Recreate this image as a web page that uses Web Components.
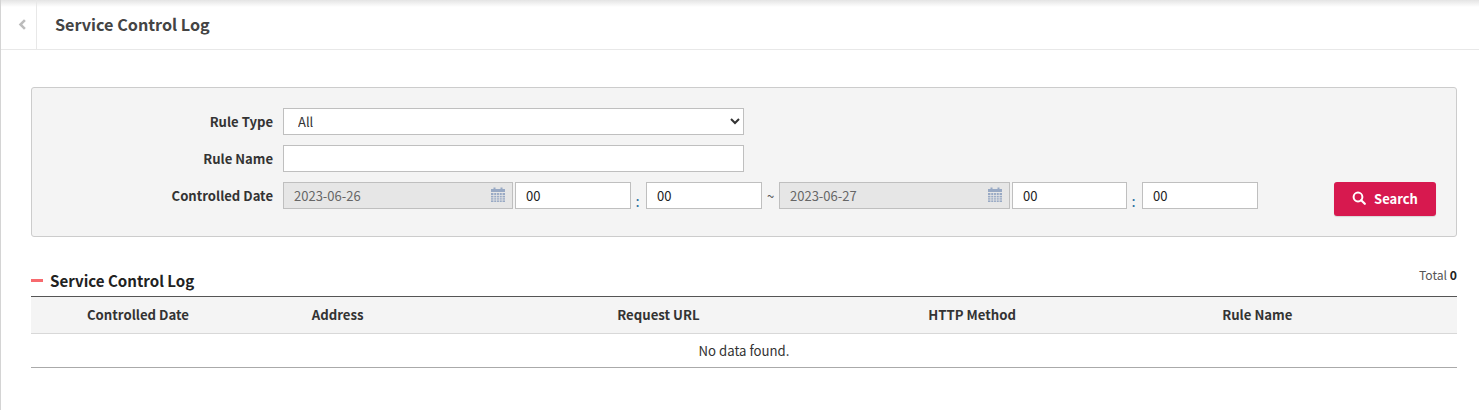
<!DOCTYPE html>
<html lang="en">
<head>
<meta charset="utf-8">
<title>Service Control Log</title>
<style>
  html, body { margin: 0; padding: 0; background: #fff; }
  body { font-family: "Noto Sans CJK KR", "Noto Sans", sans-serif; font-size: 13.2px; color: #333; }
</style>
</head>
<body>
<log-page>
  <page-header slot="header" title="Service Control Log"></page-header>
  <search-panel>
    <form-row label="Rule Type"><rule-select></rule-select></form-row>
    <form-row label="Rule Name"><text-field width="461"></text-field></form-row>
    <form-row label="Controlled Date">
      <date-field value="2023-06-26"></date-field>
      <time-field></time-field>
      <span class="tilde">~</span>
      <date-field value="2023-06-27" wide></date-field>
      <time-field></time-field>
    </form-row>
    <search-button slot="action">Search</search-button>
  </search-panel>
  <log-table title="Service Control Log" total="0"></log-table>
</log-page>

<script>
const CTRL = `
  box-sizing: border-box; height: 27px; border: 1px solid #bfbfbf; background: #fff;
  font: 13px "Noto Sans CJK KR", "Noto Sans", sans-serif; color: #333; border-radius: 0; outline: none;
`;

class LogPage extends HTMLElement {
    constructor() {
        super();
        this.attachShadow({ mode: 'open' }).innerHTML = `
      <style>
        :host { display: block; box-sizing: border-box; height: 410px; border-left: 1px solid #d4d4d4; position: relative; overflow: hidden; }
        .shade { position: absolute; left: 0; right: 0; top: 0; height: 7px; background: linear-gradient(#e4e4e4, #fff); }
        main { padding: 37px 22px 0 30px; }
      </style>
      <div class="shade"></div>
      <slot name="header"></slot>
      <main><slot></slot></main>
    `;
    }
}

class PageHeader extends HTMLElement {
    constructor() {
        super();
        this.attachShadow({ mode: 'open' }).innerHTML = `
      <style>
        :host { display: flex; align-items: stretch; position: relative; height: 50px; box-sizing: border-box; border-bottom: 1px solid #e8e8e8; }
        .back { width: 36px; border-right: 1px solid #e8e8e8; display: flex; align-items: center; justify-content: center; height: 49px; padding-left: 6px; box-sizing: border-box; }
        h1 { margin: 0 0 0 18px; font-size: 16.2px; font-weight: 700; color: #444; line-height: 49px; }
      </style>
      <div class="back">
        <svg width="8" height="11" viewBox="0 0 8 11"><path d="M6 0.3 L0.7 5.5 L6 10.7 L7.8 8.9 L4.3 5.5 L7.8 2.1 Z" fill="#bcbcbc"/></svg>
      </div>
      <h1>${this.getAttribute('title')}</h1>
    `;
    }
}

class SearchPanel extends HTMLElement {
    constructor() {
        super();
        this.attachShadow({ mode: 'open' }).innerHTML = `
      <style>
        :host { display: flex; box-sizing: border-box; height: 150px; background: #f4f4f4; border: 1px solid #ccc; border-radius: 3px; padding: 20px 20px 0 0; }
        .rows { flex: 1; display: flex; flex-direction: column; gap: 10px; }
        .action { align-self: flex-start; margin-top: 74px; }
      </style>
      <div class="rows"><slot></slot></div>
      <div class="action"><slot name="action"></slot></div>
    `;
    }
}

class FormRow extends HTMLElement {
    constructor() {
        super();
        this.attachShadow({ mode: 'open' }).innerHTML = `
      <style>
        :host { display: flex; align-items: center; height: 27px; }
        label { width: 241px; text-align: right; margin-right: 10px; font-size: 13.1px; font-weight: 700; color: #333; white-space: nowrap; line-height: 27px; }
        .ctl { display: flex; align-items: center; }
        ::slotted(.tilde) { width: 17px; text-align: center; color: #555; font-size: 13px; }
      </style>
      <label>${this.getAttribute('label')}</label>
      <div class="ctl"><slot></slot></div>
    `;
    }
}

class RuleSelect extends HTMLElement {
    constructor() {
        super();
        this.attachShadow({ mode: 'open' }).innerHTML = `
      <style>
        :host { display: block; }
        select { ${CTRL} width: 461px; padding: 0 0 0 10px; }
      </style>
      <select><option>All</option></select>
    `;
    }
}

class TextField extends HTMLElement {
    constructor() {
        super();
        this.attachShadow({ mode: 'open' }).innerHTML = `
      <style>
        :host { display: block; }
        input { ${CTRL} width: ${this.getAttribute('width')}px; padding: 0 10px; }
      </style>
      <input type="text">
    `;
    }
}

class DateField extends HTMLElement {
    constructor() {
        super();
        const width = this.hasAttribute('wide') ? 231 : 230;
        this.attachShadow({ mode: 'open' }).innerHTML = `
      <style>
        :host { display: block; position: relative; width: ${width}px; height: 27px; margin-right: 2px; }
        input { ${CTRL} width: 100%; padding: 0 10px; background: #e6e6e6; color: #666; }
        svg { position: absolute; right: 8px; top: 5px; }
      </style>
      <input type="text" readonly value="${this.getAttribute('value')}">
      <svg width="14" height="15" viewBox="0 0 14 15">
        <path fill="#98a9c4" d="M0 2h2.5V0.5h2V2h5V0.5h2V2H14v3H0zM0 6h14v9H0z"/>
        <path stroke="#e6e6e6" stroke-width="0.8" fill="none" d="M0 8.5h14M0 10.8h14M0 13h14M2.8 6v9M5.6 6v9M8.4 6v9M11.2 6v9"/>
      </svg>
    `;
    }
}

class TimeField extends HTMLElement {
    constructor() {
        super();
        const second = this.previousElementSibling && this.previousElementSibling.hasAttribute('wide');
        this.attachShadow({ mode: 'open' }).innerHTML = `
      <style>
        :host { display: flex; align-items: center; }
        input { ${CTRL} width: 116px; padding: 0 10px; color: #222; }
        input.first { width: ${second ? 115 : 116}px; }
        .colon { width: 15px; text-align: center; color: #2a6f9e; font-size: 15px; line-height: 27px; position: relative; top: 5px; left: -1px; }
      </style>
      <input class="first" type="text" value="00"><span class="colon">:</span><input type="text" value="00">
    `;
    }
}

class SearchButton extends HTMLElement {
    constructor() {
        super();
        this.attachShadow({ mode: 'open' }).innerHTML = `
      <style>
        :host { display: block; }
        button { box-sizing: border-box; width: 102px; height: 34px; border: 0; border-radius: 3px; background: #d7194f; color: #fff; display: flex; align-items: center; justify-content: center; gap: 8px; font: 700 13px "Noto Sans CJK KR", "Noto Sans", sans-serif; padding: 0 0 2px; box-shadow: 0 1px 1px rgba(0,0,0,.12); }
      </style>
      <button>
        <svg width="14" height="14" viewBox="0 0 14 14"><circle cx="6" cy="6" r="4.4" fill="none" stroke="#fff" stroke-width="2"/><path d="M9.2 9.2 L12.8 12.8" stroke="#fff" stroke-width="2.2" stroke-linecap="round"/></svg>
        <slot></slot>
      </button>
    `;
    }
}

class LogTable extends HTMLElement {
    constructor() {
        super();
        const cols = [['Controlled Date', 15], ['Address', 13], ['Request URL', 32], ['HTTP Method', 12], ['Rule Name', 28]];
        this.attachShadow({ mode: 'open' }).innerHTML = `
      <style>
        :host { display: block; margin-top: 29px; }
        .head { display: flex; justify-content: space-between; height: 30px; }
        h2 { margin: 0; height: 28px; font-size: 15.1px; font-weight: 700; color: #222; display: flex; align-items: center; gap: 7px; line-height: 28px; }
        h2::before { content: ""; width: 12px; height: 3px; background: #f76a6e; }
        .total { font-size: 12.2px; color: #555; line-height: 18px; }
        .total b { color: #222; }
        table { width: 100%; border-collapse: collapse; table-layout: fixed; border-top: 1px solid #555; }
        th { height: 37px; padding: 0 0 2px; background: #f4f4f4; border-bottom: 1px solid #d8d8d8; font-size: 13.2px; font-weight: 700; color: #333; box-sizing: border-box; }
        td { height: 32px; padding: 0 0 1px; text-align: center; border-bottom: 1px solid #aaa; font-size: 13.2px; color: #333; box-sizing: content-box; }
      </style>
      <div class="head">
        <h2>${this.getAttribute('title')}</h2>
        <div class="total">Total <b>${this.getAttribute('total')}</b></div>
      </div>
      <table>
        <colgroup>${cols.map(c => `<col style="width:${c[1]}%">`).join('')}</colgroup>
        <thead><tr>${cols.map(c => `<th>${c[0]}</th>`).join('')}</tr></thead>
        <tbody><tr><td colspan="5">No data found.</td></tr></tbody>
      </table>
    `;
    }
}

customElements.define('log-page', LogPage);
customElements.define('page-header', PageHeader);
customElements.define('search-panel', SearchPanel);
customElements.define('form-row', FormRow);
customElements.define('rule-select', RuleSelect);
customElements.define('text-field', TextField);
customElements.define('date-field', DateField);
customElements.define('time-field', TimeField);
customElements.define('search-button', SearchButton);
customElements.define('log-table', LogTable);
</script>
</body>
</html>
